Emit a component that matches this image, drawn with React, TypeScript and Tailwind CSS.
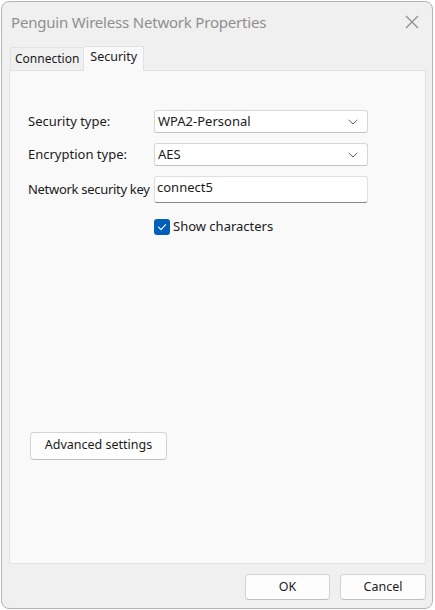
import React, { useState } from 'react';

const Chevron = () => (
  <svg width="12" height="12" viewBox="0 0 12 12" fill="none" className="text-[#5f5f5f]">
    <path d="M2 4.2 L6 8 L10 4.2" stroke="currentColor" strokeWidth="1" strokeLinecap="round" strokeLinejoin="round" />
  </svg>
);

const Combo = ({ value }: { value: string }) => (
  <div className="w-[214px] h-[23px] bg-white border border-[#d6d6d6] border-b-[#c2c2c2] rounded-[3px] flex items-center justify-between pl-[3px] pr-[8px] text-[13px] text-[#1b1b1b]">
    <span>{value}</span>
    <Chevron />
  </div>
);

export default function App() {
  const [show, setShow] = useState(true);

  return (
    <div className="w-[435px] h-[610px] bg-white pl-[1px] pt-[1px] pr-[2px] pb-[1px]" style={{ fontFamily: '"Noto Sans", "Open Sans", sans-serif' }}>
      <div className="w-full h-full bg-[#f0f0f0] border border-[#b4b4b4] rounded-[8px] flex flex-col">
        {/* title bar */}
        <div className="h-[40px] flex items-center justify-between pl-[9px] pr-[13px]">
          <span className="text-[15px] text-[#8f8f8f] tracking-[-0.2px]">Penguin Wireless Network Properties</span>
          <svg width="14" height="14" viewBox="0 0 14 14" className="text-[#8b8b8b]">
            <path d="M1 1 L13 13 M13 1 L1 13" stroke="currentColor" strokeWidth="1.2" />
          </svg>
        </div>

        {/* tabs */}
        <div className="flex items-end pl-[8px] h-[28px]">
          <div className="h-[23px] px-[4px] flex items-center bg-[#f0f0f0] border border-[#e2e2e2] border-b-0 text-[12px] text-[#1b1b1b]">Connection</div>
          <div className="h-[25px] px-[6px] flex items-start pt-[1px] bg-[#f9f9f9] border border-[#e2e2e2] border-b-0 border-l-0 text-[12.5px] text-[#1b1b1b] relative top-[1px] z-10">Security</div>
        </div>

        {/* panel */}
        <div className="mx-[7px] w-[417px] h-[494px] bg-[#f9f9f9] border border-[#e2e2e2] flex flex-col pl-[18px] pt-[39px]">
          <div className="flex flex-col gap-[10px] text-[13px] text-[#1b1b1b]">
            <div className="flex items-center">
              <span className="w-[126px]">Security type:</span>
              <Combo value="WPA2-Personal" />
            </div>
            <div className="flex items-center">
              <span className="w-[126px]">Encryption type:</span>
              <Combo value="AES" />
            </div>
            <div className="flex items-center">
              <span className="w-[126px] whitespace-nowrap tracking-[-0.3px]">Network security key</span>
              <div className="w-[214px] h-[27px] bg-white border border-[#e0e0e0] border-b-[#868686] rounded-[3px] flex items-center pl-[2px] pb-[3px]">
                connect5
              </div>
            </div>
            <div className="flex items-center pl-[126px] mt-[4px]">
              <button onClick={() => setShow(!show)} className="w-[16px] h-[16px] rounded-[3px] bg-[#005fb8] flex items-center justify-center mr-[3px]">
                {show && (
                  <svg width="10" height="10" viewBox="0 0 10 10" fill="none">
                    <path d="M1.5 5.2 L4 7.6 L8.6 2.6" stroke="white" strokeWidth="1.1" strokeLinecap="round" strokeLinejoin="round" />
                  </svg>
                )}
              </button>
              <span>Show characters</span>
            </div>
          </div>

          <button className="mt-[195px] ml-[2px] w-[137px] h-[28px] bg-[#fdfdfd] border border-[#d3d3d3] border-b-[#c0c0c0] rounded-[4px] text-[12.5px] text-[#1b1b1b] flex items-center justify-center">
            Advanced settings
          </button>
        </div>

        {/* footer */}
        <div className="flex justify-end gap-[10px] pr-[6px] pt-[10px]">
          <button className="w-[85px] h-[26px] bg-[#fdfdfd] border border-[#d3d3d3] border-b-[#c0c0c0] rounded-[4px] text-[12.5px] text-[#1b1b1b]">OK</button>
          <button className="w-[86px] h-[26px] bg-[#fdfdfd] border border-[#d3d3d3] border-b-[#c0c0c0] rounded-[4px] text-[12.5px] text-[#1b1b1b]">Cancel</button>
        </div>
      </div>
    </div>
  );
}
